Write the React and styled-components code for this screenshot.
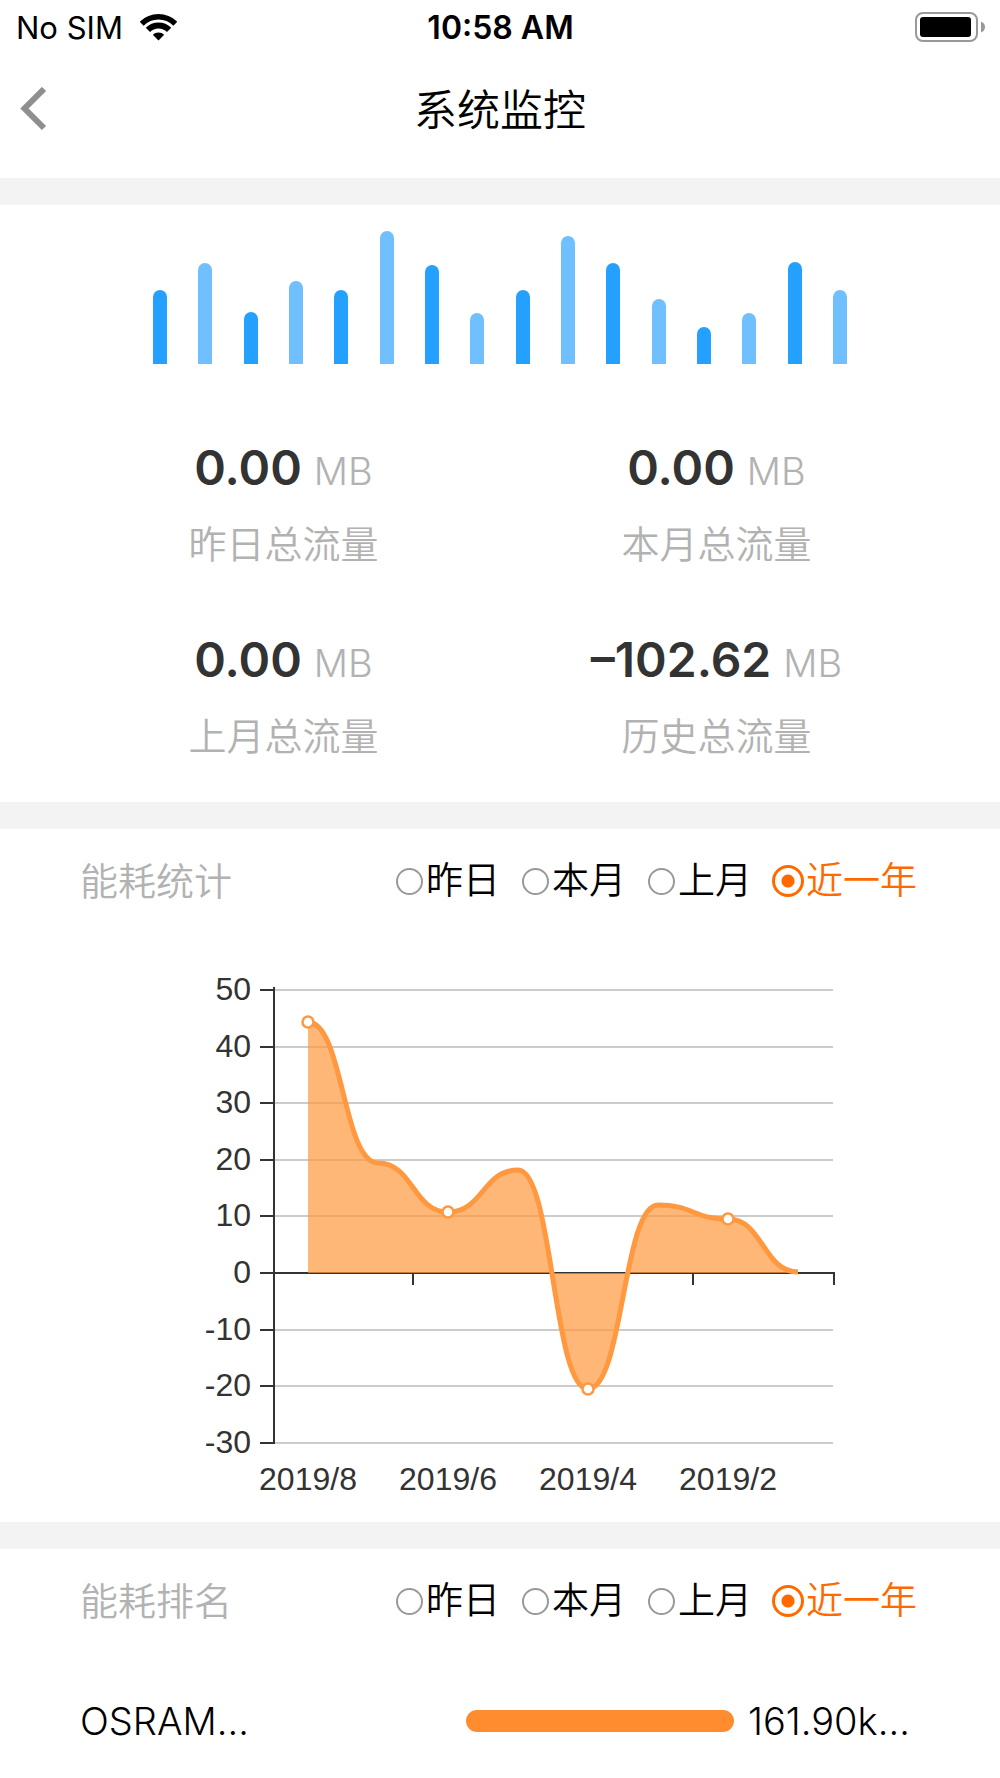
import React, { useState } from 'react';
import styled, { createGlobalStyle } from 'styled-components';

const GlobalStyle = createGlobalStyle`
  * {
    box-sizing: border-box;
  }

  body {
    margin: 0;
    background: #fff;
    color: #000;
    font-family: Inter, 'Noto Sans CJK SC', sans-serif;
  }
`;

const StatusBar = styled.div`
  display: grid;
  grid-template-columns: 1fr auto 1fr;
  align-items: center;
  height: 54px;
  padding: 0 15px 0 16px;
`;

const Carrier = styled.div`
  display: flex;
  align-items: center;
  gap: 17px;
  font-size: 31px;
`;

const Time = styled.div`
  font-size: 32px;
  font-weight: 600;
`;

const Battery = styled.svg`
  justify-self: end;
`;

const NavBar = styled.header`
  display: grid;
  grid-template-columns: 1fr auto 1fr;
  align-items: center;
  height: 124px;
  padding: 0 20px 12px;
`;

const BackButton = styled.button`
  display: flex;
  justify-self: start;
  padding: 0;
  border: 0;
  background: none;
`;

const Title = styled.h1`
  margin: 0;
  font-size: 43px;
  font-weight: 350;
  line-height: 60px;
`;

const Section = styled.section`
  border-top: 27px solid #f3f3f3;
`;

const Bars = styled.div`
  display: flex;
  justify-content: space-between;
  align-items: flex-end;
  padding: 26px 153px 0;
`;

const Bar = styled.div`
  width: 14px;
  border-radius: 7px 7px 0 0;
  background: ${({ $light }) => ($light ? '#70c0ff' : '#24a0ff')};
`;

const Stats = styled.div`
  display: grid;
  grid-template-columns: 1fr 1fr;
  row-gap: 58px;
  padding: 74px 67px 38px;
  text-align: center;
`;

const StatValue = styled.div`
  color: #333;
  font-size: 48px;
  font-weight: 600;
  line-height: 60px;
`;

const Unit = styled.span`
  margin-left: 12px;
  color: #b2b2b2;
  font-size: 38px;
  font-weight: 350;
  line-height: 1;
`;

const StatLabel = styled.div`
  margin-top: 18px;
  color: #b2b2b2;
  font-size: 38px;
  font-weight: 350;
  line-height: 56px;
`;

const SectionHeader = styled.div`
  display: flex;
  justify-content: space-between;
  align-items: center;
  height: 104px;
  padding: 0 83px 0 80px;
  line-height: 56px;
`;

const SectionTitle = styled.h2`
  margin: 0;
  color: #b2b2b2;
  font-size: 38px;
  font-weight: 350;
`;

const Options = styled.div`
  display: flex;
  gap: 22px;
  font-size: 37px;
  font-weight: 350;
`;

const Option = styled.label`
  display: flex;
  align-items: center;
  color: ${({ $active }) => ($active ? '#ff6a00' : '#000')};
`;

const Radio = styled.input`
  appearance: none;
  width: 27px;
  height: 27px;
  margin: 0 3px 0 0;
  border: 2px solid #999;
  border-radius: 50%;

  &:checked {
    width: 32px;
    height: 32px;
    margin: 0 2px 0 -2px;
    border: 3px solid #ff6a00;
    background: radial-gradient(circle, #ff6a00 6px, transparent 7px);
  }
`;

const ChartSvg = styled.svg`
  display: block;
  width: 100%;
  height: auto;
  font-family: 'Liberation Sans', Arial, sans-serif;
  font-size: 32px;
`;

const RankRow = styled.div`
  display: flex;
  align-items: center;
  padding: 48px 80px 36px;
  font-size: 38px;
  font-weight: 350;
  line-height: 40px;
`;

const RankName = styled.div`
  width: 46%;
`;

const RankBar = styled.div`
  flex: 1;
  height: 22px;
  border-radius: 11px;
  background: #ff8c2e;
`;

const RankValue = styled.div`
  width: 172px;
  margin-left: 14px;
`;

const barHeights = [74, 101, 52, 83, 74, 133, 99, 51, 74, 128, 101, 65, 37, 51, 102, 74];

const stats = [
  { label: '昨日总流量', value: '0.00' },
  { label: '本月总流量', value: '0.00' },
  { label: '上月总流量', value: '0.00' },
  { label: '历史总流量', value: '–102.62' },
];

const periods = ['昨日', '本月', '上月', '近一年'];

const yTicks = [50, 40, 30, 20, 10, 0, -10, -20, -30];
const usage = [44.3, 19.5, 10.8, 18.2, -20.5, 12, 9.5, 0.2];
const months = ['2019/8', '2019/6', '2019/4', '2019/2'];

const toX = (i) => 308 + i * 70;
const toY = (v) => Math.round(57 + (50 - v) * 5.66);

const linePath = usage
  .map((v, i) => {
    if (i === 0) return `M${toX(0)} ${toY(v)}`;
    const mid = toX(i) - 35;
    return `C${mid} ${toY(usage[i - 1])} ${mid} ${toY(v)} ${toX(i)} ${toY(v)}`;
  })
  .join(' ');

const areaPath = `${linePath} V${toY(0)} H${toX(0)} Z`;

const UsageChart = () => (
  <ChartSvg viewBox="0 0 1000 589" role="img" aria-label="能耗统计">
    {yTicks.map((v) => (
      <g key={v}>
        {v !== 0 && (
          <path d={`M275 ${toY(v)}H833`} stroke="#ccc" strokeWidth="2" />
        )}
        <path d={`M260 ${toY(v)}H275`} stroke="#333" strokeWidth="2" />
        <text x="251" y={toY(v) + 10} textAnchor="end" fill="#333">
          {v}
        </text>
      </g>
    ))}
    <path
      d={`M274 54V511M274 ${toY(0)}H835M413 340V352M693 340V352M834 340V352`}
      fill="none"
      stroke="#333"
      strokeWidth="2"
    />
    <path d={areaPath} fill="#ff983f" fillOpacity="0.7" />
    <path d={linePath} fill="none" stroke="#ff983f" strokeWidth="5" />
    {months.map((m, i) => (
      <g key={m}>
        <circle
          cx={toX(i * 2)}
          cy={toY(usage[i * 2])}
          r="5.5"
          fill="#fff"
          stroke="#ff983f"
          strokeWidth="2.5"
        />
        <text x={toX(i * 2)} y="557" textAnchor="middle" fill="#333">
          {m}
        </text>
      </g>
    ))}
  </ChartSvg>
);

const PeriodHeader = ({ title, name }) => {
  const [period, setPeriod] = useState('近一年');

  return (
    <SectionHeader>
      <SectionTitle>{title}</SectionTitle>
      <Options role="radiogroup" aria-label={title}>
        {periods.map((p) => (
          <Option key={p} $active={p === period}>
            <Radio
              type="radio"
              name={name}
              checked={p === period}
              onChange={() => setPeriod(p)}
            />
            {p}
          </Option>
        ))}
      </Options>
    </SectionHeader>
  );
};

const App = () => {
  return (
    <>
      <GlobalStyle />
      <StatusBar>
        <Carrier>
          No SIM
          <svg width="37" height="28" viewBox="0 0 37 28">
            <path d="M18.5 27.5 L12.8 21.8 A8 8 0 0 1 24.2 21.8 Z" />
            <path
              d="M7.9 16.9 A15 15 0 0 1 29.1 16.9"
              fill="none"
              stroke="#000"
              strokeWidth="6"
            />
            <path
              d="M1.7 10.7 A23.8 23.8 0 0 1 35.3 10.7"
              fill="none"
              stroke="#000"
              strokeWidth="5.5"
            />
          </svg>
        </Carrier>
        <Time>10:58 AM</Time>
        <Battery width="71" height="32" viewBox="0 0 71 32">
          <rect x="2" y="2" width="61" height="28" rx="7" fill="none" stroke="#999" strokeWidth="2" />
          <rect x="6" y="6" width="51" height="20" rx="3" />
          <path d="M67 10.5 Q71 12 71 16 Q71 20 67 21.5 Z" fill="#999" />
        </Battery>
      </StatusBar>
      <NavBar>
        <BackButton aria-label="返回">
          <svg width="28" height="46" viewBox="0 0 28 46">
            <path d="M24 2 L4.5 21.5 L24 41" fill="none" stroke="#8f8f8f" strokeWidth="6" />
          </svg>
        </BackButton>
        <Title>系统监控</Title>
      </NavBar>

      <Section>
        <Bars>
          {barHeights.map((h, i) => (
            <Bar key={i} $light={i % 2 === 1} style={{ height: h }} />
          ))}
        </Bars>
        <Stats>
          {stats.map((s) => (
            <div key={s.label}>
              <StatValue>
                {s.value}
                <Unit>MB</Unit>
              </StatValue>
              <StatLabel>{s.label}</StatLabel>
            </div>
          ))}
        </Stats>
      </Section>

      <Section>
        <PeriodHeader title="能耗统计" name="usage" />
        <UsageChart />
      </Section>

      <Section>
        <PeriodHeader title="能耗排名" name="rank" />
        <RankRow>
          <RankName>OSRAM…</RankName>
          <RankBar />
          <RankValue>161.90k…</RankValue>
        </RankRow>
      </Section>
    </>
  );
};

export default App;
